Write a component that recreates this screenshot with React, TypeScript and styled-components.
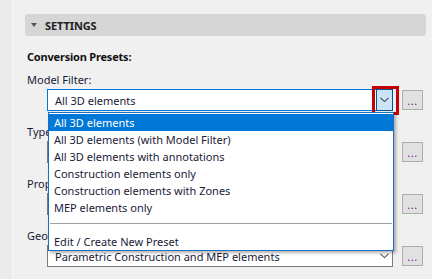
import React from 'react';
import styled, { createGlobalStyle } from 'styled-components';

const GlobalStyle = createGlobalStyle`
  html, body {
    margin: 0;
    padding: 0;
    background: #f0f0f0;
  }
  body {
    font-family: "Noto Sans", "Open Sans", sans-serif;
    font-size: 11px;
    color: #1a1a38;
  }
`;

const Page = styled.div`
  display: flex;
  width: 432px;
  height: 279px;
  overflow: hidden;
`;

const SideStrip = styled.div`
  width: 12px;
  flex: none;
  background: #ebebeb;
  border-right: 1px solid #f7f7f7;
`;

const Main = styled.div`
  flex: 1;
  padding: 14px 6px 0 12px;
  position: relative;
`;

const SectionBar = styled.div`
  display: flex;
  align-items: center;
  gap: 8px;
  height: 22px;
  padding-left: 6px;
  background: #d6d6d6;
  border-radius: 3px;
`;

const Caret = styled.span`
  width: 0;
  height: 0;
  border-left: 3px solid transparent;
  border-right: 3px solid transparent;
  border-top: 4px solid #555;
`;

const SectionTitle = styled.span`
  font-weight: 700;
  font-size: 11px;
  color: #222;
  letter-spacing: -0.1px;
`;

const Body = styled.div`
  padding: 13px 0 0 2px;
  display: flex;
  flex-direction: column;
`;

const Heading = styled.div`
  font-weight: 700;
  height: 16px;
  line-height: 16px;
  color: #111;
  letter-spacing: -0.2px;
  margin-bottom: 7px;
`;

const Row = styled.div`
  display: flex;
  flex-direction: column;
  height: 52px;
`;

const Label = styled.div`
  height: 16px;
  line-height: 16px;
  margin-bottom: 1px;
`;

const FieldLine = styled.div`
  display: flex;
  align-items: center;
  gap: 9px;
  margin-left: 20px;
  position: relative;
`;

const Select = styled.div<{ $focused?: boolean }>`
  position: relative;
  box-sizing: border-box;
  width: 346px;
  height: 22px;
  display: flex;
  align-items: center;
  justify-content: space-between;
  padding-left: 7px;
  background: #fff;
  border: 1px solid ${(p) => (p.$focused ? '#0078d7' : '#7a7a7a')};
`;

const ArrowBox = styled.div<{ $active?: boolean }>`
  position: relative;
  box-sizing: border-box;
  width: 17px;
  height: 22px;
  margin: -1px -1px -1px 0;
  display: flex;
  align-items: center;
  justify-content: center;
  background: ${(p) => (p.$active ? '#cce4f7' : 'transparent')};
  border: 1px solid ${(p) => (p.$active ? '#005499' : 'transparent')};
`;

const Highlight = styled.div`
  position: absolute;
  left: -5px;
  top: -4px;
  width: 27px;
  height: 29px;
  box-sizing: border-box;
  border: 3px solid #c40000;
  pointer-events: none;
`;

const DotsButton = styled.div`
  box-sizing: border-box;
  width: 21px;
  height: 20px;
  background: #e1e1e1;
  border: 1px solid #adadad;
  display: flex;
  justify-content: center;
  align-items: flex-end;
  padding-bottom: 4px;
  color: #6a1a8a;
  font-size: 11px;
  line-height: 8px;
  letter-spacing: 0.5px;
`;

const DropList = styled.div`
  position: absolute;
  left: 0;
  top: 22px;
  box-sizing: border-box;
  width: 346px;
  padding: 1px 0 0;
  background: #fff;
  border: 1px solid #1c6fbf;
  box-shadow: 2px 2px 3px rgba(0, 0, 0, 0.3);
  z-index: 2;
`;

const Option = styled.div<{ $selected?: boolean }>`
  height: 17px;
  line-height: 17px;
  padding-left: 5px;
  background: ${(p) => (p.$selected ? '#0078d7' : 'transparent')};
  color: ${(p) => (p.$selected ? '#fff' : 'inherit')};
`;

const Separator = styled.div`
  height: 1px;
  margin: 7px 1px 9px;
  background: #a0a0a0;
`;

const Chevron: React.FC<{ color?: string }> = ({ color = '#555' }) => (
  <svg width="9" height="6" viewBox="0 0 9 6">
    <path d="M0.5 0.8 L4.5 4.6 L8.5 0.8" fill="none" stroke={color} strokeWidth="1.1" />
  </svg>
);

const presets = [
  'All 3D elements',
  'All 3D elements (with Model Filter)',
  'All 3D elements with annotations',
  'Construction elements only',
  'Construction elements with Zones',
  'MEP elements only',
];

const App: React.FC = () => {
  return (
    <>
      <GlobalStyle />
      <Page>
        <SideStrip />
        <Main>
          <SectionBar>
            <Caret />
            <SectionTitle>SETTINGS</SectionTitle>
          </SectionBar>
          <Body>
            <Heading>Conversion Presets:</Heading>
            <Row>
              <Label>Model Filter:</Label>
              <FieldLine>
                <Select $focused>
                  <span>All 3D elements</span>
                  <ArrowBox $active>
                    <Chevron color="#444" />
                    <Highlight />
                  </ArrowBox>
                  <DropList>
                    {presets.map((p, i) => (
                      <Option key={p} $selected={i === 0}>
                        {p}
                      </Option>
                    ))}
                    <Separator />
                    <Option>Edit / Create New Preset</Option>
                  </DropList>
                </Select>
                <DotsButton>...</DotsButton>
              </FieldLine>
            </Row>
            <Row>
              <Label>Type</Label>
              <FieldLine>
                <Select>
                  <span />
                  <ArrowBox>
                    <Chevron />
                  </ArrowBox>
                </Select>
                <DotsButton>...</DotsButton>
              </FieldLine>
            </Row>
            <Row>
              <Label>Prop</Label>
              <FieldLine>
                <Select>
                  <span />
                  <ArrowBox>
                    <Chevron />
                  </ArrowBox>
                </Select>
                <DotsButton>...</DotsButton>
              </FieldLine>
            </Row>
            <Row>
              <Label>Geo</Label>
              <FieldLine>
                <Select>
                  <span>Parametric Construction and MEP elements</span>
                  <ArrowBox>
                    <Chevron />
                  </ArrowBox>
                </Select>
                <DotsButton>...</DotsButton>
              </FieldLine>
            </Row>
          </Body>
        </Main>
      </Page>
    </>
  );
};

export default App;
